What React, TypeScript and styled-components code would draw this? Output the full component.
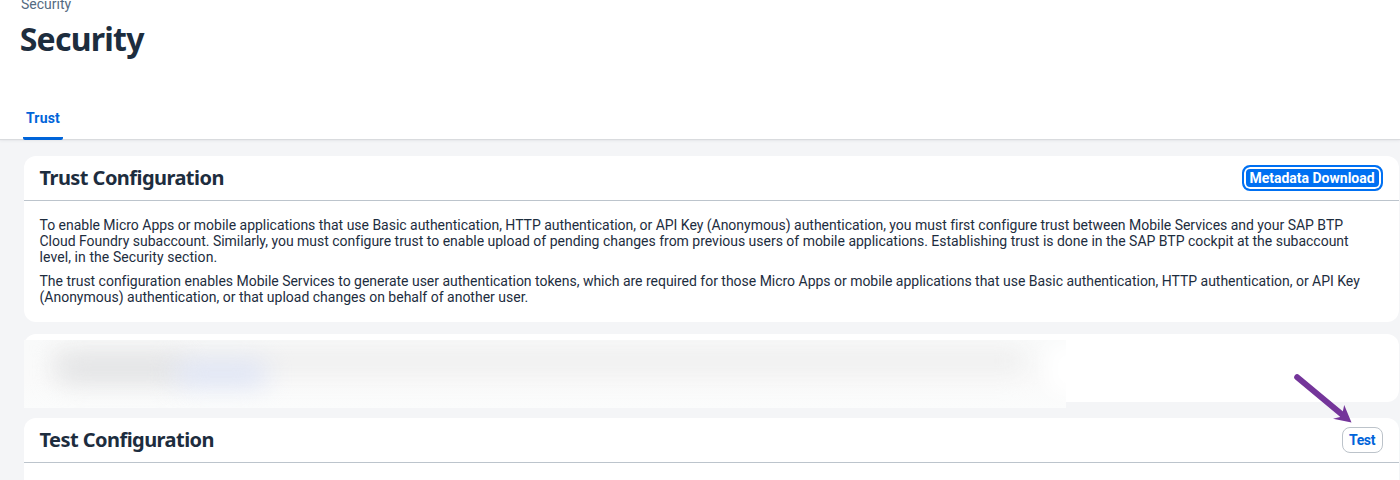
import React from "react";
import styled, { createGlobalStyle } from "styled-components";

const Global = createGlobalStyle`
  * { box-sizing: border-box; }
  body { margin: 0; background: #f4f5f7; overflow: hidden; }
`;

const Page = styled.div`
  width: 1400px;
  height: 480px;
  overflow: hidden;
  background: #f4f5f7;
  color: #1d2d3e;
  font-family: Roboto, "Liberation Sans", sans-serif;
  font-size: 14px;
`;

const Header = styled.header`
  height: 139px;
  background: #fff;
  box-shadow: 0 1px 1px #d9dbde, 0 2px 3px rgba(34, 53, 72, 0.06);
  display: flex;
  flex-direction: column;
  overflow: visible;
`;

const Breadcrumb = styled.div`
  margin: -4px 0 0 21px;
  height: 17px;
  line-height: 17px;
  color: #556b82;
`;

const Title = styled.h1`
  margin: 5px 0 0 19.7px;
  height: 42px;
  line-height: 42px;
  font-family: "Noto Sans", Roboto, sans-serif;
  font-size: 32px;
  font-weight: 700;
  letter-spacing: -0.75px;
`;

const Tabs = styled.nav`
  display: flex;
  margin: auto 0 -1px 23px;
`;

const Tab = styled.a`
  display: block;
  width: 40px;
  height: 34px;
  padding-left: 3px;
  line-height: 24px;
  color: #0064d9;
  font-weight: 700;
  letter-spacing: 0.15px;
  background: linear-gradient(#0064d9, #0064d9) bottom / 100% 3px no-repeat;
  border-radius: 2px;
`;

const Content = styled.main`
  padding: 17px 1px 0 23.5px;
`;

const Card = styled.section<{ $height: number; $gap: number }>`
  height: ${(p) => p.$height}px;
  margin-bottom: ${(p) => p.$gap}px;
  background: #fff;
  border-radius: 12px;
`;

const CardHeader = styled.div`
  height: 45px;
  padding: 0 16.5px 0 16px;
  display: flex;
  align-items: center;
  justify-content: space-between;
  border-bottom: 1px solid #bcc4cc;
`;

const CardTitle = styled.h2`
  margin: 0;
  font-family: "Noto Sans", Roboto, sans-serif;
  font-size: 20px;
  line-height: 24px;
  font-weight: 700;
  letter-spacing: -0.55px;
`;

const Button = styled.button<{ $focused?: boolean }>`
  height: 26px;
  width: ${(p) => (p.$focused ? 141 : 41)}px;
  padding: 0;
  border-radius: 8px;
  font: 700 14px/20px Roboto, "Liberation Sans", sans-serif;
  letter-spacing: ${(p) => (p.$focused ? 0 : -0.4)}px;
  white-space: nowrap;
  border: ${(p) => (p.$focused ? "2px solid #0070f2" : "1px solid #bcc3ca")};
  color: ${(p) => (p.$focused ? "#fff" : "#0064d9")};
  background: ${(p) => (p.$focused ? "#0070f2" : "#fff")};
  box-shadow: ${(p) => (p.$focused ? "inset 0 0 0 2px #fff" : "none")};
`;

const Paragraph = styled.p`
  margin: 0 0 8px;
`;

const CardBody = styled.div`
  padding: 16px 16px 0;
`;

const Line = styled.span<{ $tracking: number }>`
  display: block;
  height: 16.1px;
  line-height: 16px;
  white-space: nowrap;
  letter-spacing: ${(p) => p.$tracking}px;
`;

const Redaction = styled.div`
  position: relative;
  top: 6px;
  width: 1042px;
  height: 68px;
  overflow: hidden;
  background: linear-gradient(#f9fafa, #fafafa 60%, #fbfcfc);
`;

const Smudge = styled.i<{ $x: number; $y: number; $w: number; $h: number; $c: string; $blur: number }>`
  position: absolute;
  left: ${(p) => p.$x}px;
  top: ${(p) => p.$y}px;
  width: ${(p) => p.$w}px;
  height: ${(p) => p.$h}px;
  background: ${(p) => p.$c};
  border-radius: 8px;
  filter: blur(${(p) => p.$blur}px);
`;

const Arrow = styled.svg`
  position: absolute;
  left: 1290px;
  top: 370px;
`;

const intro = [
  { t: "To enable Micro Apps or mobile applications that use Basic authentication, HTTP authentication, or API Key (Anonymous) authentication, you must first configure trust between Mobile Services and your SAP BTP", s: -0.02 },
  { t: "Cloud Foundry subaccount. Similarly, you must configure trust to enable upload of pending changes from previous users of mobile applications. Establishing trust is done in the SAP BTP cockpit at the subaccount", s: -0.013 },
  { t: "level, in the Security section.", s: 0.08 },
];
const detail = [
  { t: "The trust configuration enables Mobile Services to generate user authentication tokens, which are required for those Micro Apps or mobile applications that use Basic authentication, HTTP authentication, or API Key", s: -0.018 },
  { t: "(Anonymous) authentication, or that upload changes on behalf of another user.", s: 0 },
];

export default function App() {
  return (
    <Page>
      <Global />
      <Header>
        <Breadcrumb>Security</Breadcrumb>
        <Title>Security</Title>
        <Tabs>
          <Tab>Trust</Tab>
        </Tabs>
      </Header>
      <Content>
        <Card $height={165.5} $gap={12.5}>
          <CardHeader>
            <CardTitle>Trust Configuration</CardTitle>
            <Button $focused>Metadata Download</Button>
          </CardHeader>
          <CardBody>
            {[intro, detail].map((lines, i) => (
              <Paragraph key={i}>
                {lines.map((l) => (
                  <Line key={l.t} $tracking={l.s}>{l.t}</Line>
                ))}
              </Paragraph>
            ))}
          </CardBody>
        </Card>
        <Card $height={68} $gap={16}>
          <Redaction>
            <Smudge $x={30} $y={8} $w={970} $h={26} $c="#efefef" $blur={11} />
            <Smudge $x={34} $y={19} $w={125} $h={22} $c="#dfe0e2" $blur={13} />
            <Smudge $x={152} $y={23} $w={90} $h={22} $c="#dbe2f6" $blur={13} />
            <Smudge $x={1024} $y={4} $w={40} $h={50} $c="#ffffff" $blur={10} />
          </Redaction>
        </Card>
        <Card $height={90} $gap={0}>
          <CardHeader>
            <CardTitle>Test Configuration</CardTitle>
            <Button>Test</Button>
          </CardHeader>
        </Card>
      </Content>
      <Arrow width="64" height="56" viewBox="0 0 64 56">
        <path d="M7.2 7.2 L52 44.5" stroke="#74359a" strokeWidth="6" strokeLinecap="round" />
        <path d="M61.5 52.5 L54.2 35 L52.5 43 L50 47 L43 48.7 Z" fill="#74359a" />
      </Arrow>
    </Page>
  );
}
